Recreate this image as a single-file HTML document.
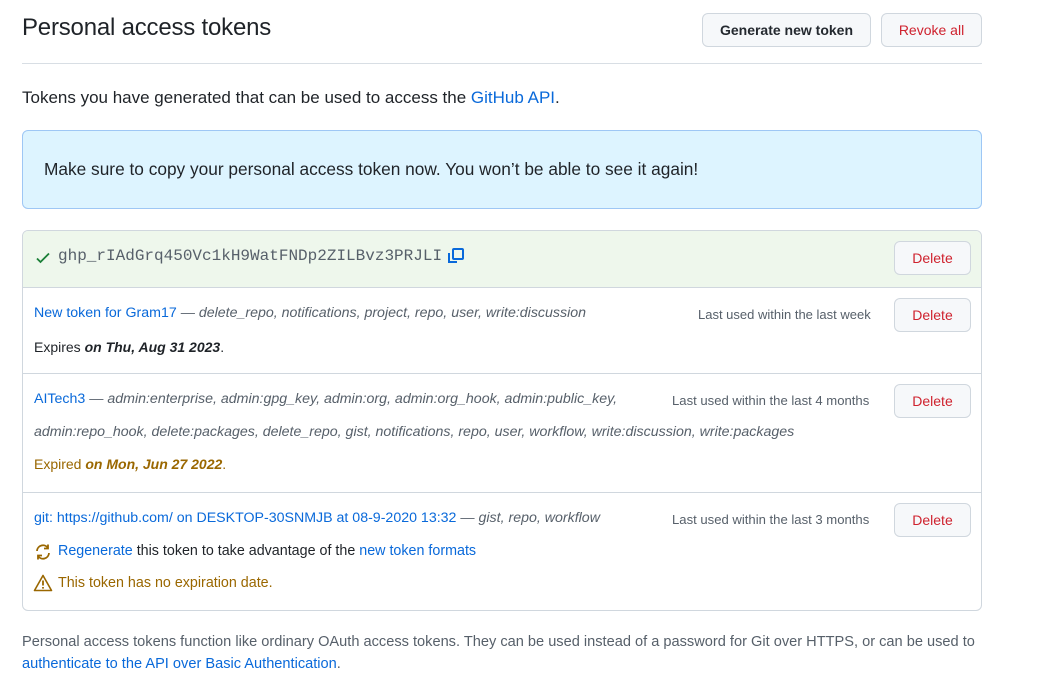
<!DOCTYPE html>
<html><head><meta charset="utf-8"><style>
body{margin:0;background:#fff;font-family:"Liberation Sans",sans-serif;color:#1f2328;width:1037px;height:697px;overflow:hidden;position:relative}
.a{position:absolute;white-space:nowrap}
a{color:#0969da;text-decoration:none}
.btn{position:absolute;border:1px solid #d0d7de;border-radius:6px;background:#f6f8fa;font-size:14px;text-align:center;box-sizing:border-box;height:34px;line-height:32px}
.del{color:#cf222e;width:77px;left:894px}
.box{position:absolute;left:22px;width:960px;border:1px solid #d0d7de;box-sizing:border-box}
i{font-style:italic;color:#57606a}
.s{font-size:13px;color:#57606a}
</style></head><body>
<div class="a" style="left:22px;top:14px;font-size:24px;letter-spacing:-0.2px">Personal access tokens</div>
<div class="btn" style="left:702px;top:13px;width:169px;font-weight:bold;font-size:14px;color:#24292f">Generate new token</div>
<div class="btn" style="left:881px;top:13px;width:101px;color:#cf222e">Revoke all</div>
<div class="a" style="left:22px;top:63px;width:960px;border-top:1px solid #d8dee4"></div>
<div class="a" style="left:22px;top:88px;font-size:17px">Tokens you have generated that can be used to access the <a>GitHub API</a>.</div>
<div class="box" style="top:130px;height:79px;background:#ddf4ff;border-color:#9ec7f5;border-radius:6px"></div>
<div class="a" style="left:44px;top:159px;font-size:17.3px">Make sure to copy your personal access token now. You won’t be able to see it again!</div>
<div class="box" style="top:230px;height:381px;border-radius:6px;overflow:hidden">
 <div style="position:absolute;left:0;top:0;width:100%;height:56px;background:#eef7ec;border-bottom:1px solid #d0d7de"></div>
 <div style="position:absolute;left:0;top:142px;width:100%;border-top:1px solid #d0d7de"></div>
 <div style="position:absolute;left:0;top:261px;width:100%;border-top:1px solid #d0d7de"></div>
</div>
<svg class="a" style="left:35px;top:250px" width="16" height="16" viewBox="0 0 16 16"><path d="M2 8.5l3.5 3.5L14 3.5" fill="none" stroke="#1a7f37" stroke-width="1.8"/></svg>
<div class="a" style="left:58px;top:247px;font-family:'Liberation Mono',monospace;font-size:16px;color:#57606a">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</div>
<svg class="a" style="left:446px;top:246px" width="20" height="20" viewBox="0 0 20 20"><path d="M3 7v9h8" fill="none" stroke="#0969da" stroke-width="2"/><rect x="7" y="3" width="10" height="10" rx="1" fill="none" stroke="#0969da" stroke-width="2"/></svg>
<div class="btn del" style="top:241px">Delete</div>
<div class="a" style="left:34px;top:305px;font-size:14.2px"><a>New token for Gram17</a> <i>— delete_repo, notifications, project, repo, user, write:discussion</i></div>
<div class="a s" style="left:698px;top:307px">Last used within the last week</div>
<div class="btn del" style="top:298px">Delete</div>
<div class="a" style="left:34px;top:339px;font-size:14px">Expires <b><i style="color:#1f2328">on Thu, Aug 31 2023</i></b>.</div>
<div class="a" style="left:34px;top:391px;font-size:14.2px"><a>AITech3</a> <i>— admin:enterprise, admin:gpg_key, admin:org, admin:org_hook, admin:public_key,</i></div>
<div class="a s" style="left:672px;top:393px;font-size:13.1px">Last used within the last 4 months</div>
<div class="btn del" style="top:384px">Delete</div>
<div class="a" style="left:34px;top:424px;font-size:14.2px"><i>admin:repo_hook, delete:packages, delete_repo, gist, notifications, repo, user, workflow, write:discussion, write:packages</i></div>
<div class="a" style="left:34px;top:456px;font-size:14px;color:#9a6700">Expired <b><i style="color:#9a6700">on Mon, Jun 27 2022</i></b>.</div>
<div class="a" style="left:34px;top:510px;font-size:14.2px"><a>git: https://github.com/ on DESKTOP-30SNMJB at 08-9-2020 13:32</a> <i>— gist, repo, workflow</i></div>
<div class="a s" style="left:672px;top:512px;font-size:13.1px">Last used within the last 3 months</div>
<div class="btn del" style="top:503px">Delete</div>
<svg class="a" style="left:34px;top:543px" width="18" height="18" viewBox="0 0 18 18"><path d="M3 8a6 6 0 0 1 11-3M15 10a6 6 0 0 1-11 3" fill="none" stroke="#9a6700" stroke-width="1.8"/><path d="M14 1.5v4h-4M4 16.5v-4h4" fill="none" stroke="#9a6700" stroke-width="1.8"/></svg>
<div class="a" style="left:58px;top:543px;font-size:14.3px"><a>Regenerate</a> this token to take advantage of the <a>new token formats</a></div>
<svg class="a" style="left:33px;top:574px" width="20" height="18" viewBox="0 0 20 18"><path d="M10 1.5L1.5 16.5h17z" fill="none" stroke="#9a6700" stroke-width="1.6" stroke-linejoin="round"/><path d="M10 6.5v5M10 13v1.6" stroke="#9a6700" stroke-width="1.8"/></svg>
<div class="a" style="left:58px;top:575px;font-size:14.3px;color:#9a6700">This token has no expiration date.</div>
<div class="a" style="left:22px;top:634px;font-size:14.6px;color:#57606a">Personal access tokens function like ordinary OAuth access tokens. They can be used instead of a password for Git over HTTPS, or can be used to</div>
<div class="a" style="left:22px;top:656px;font-size:14.6px"><a>authenticate to the API over Basic Authentication</a><span style="color:#57606a">.</span></div>
</body></html>
